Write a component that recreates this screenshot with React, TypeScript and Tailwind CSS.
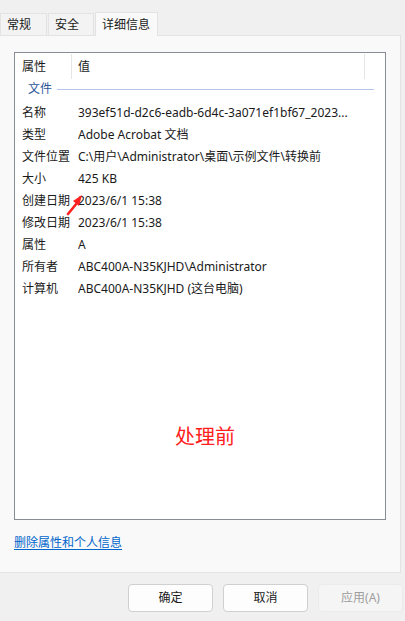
import React from "react";

const rows: [string, string][] = [
  ["名称", "393ef51d-d2c6-eadb-6d4c-3a071ef1bf67_2023..."],
  ["类型", "Adobe Acrobat 文档"],
  ["文件位置", "C:\\用户\\Administrator\\桌面\\示例文件\\转换前"],
  ["大小", "425 KB"],
  ["创建日期", "2023/6/1 15:38"],
  ["修改日期", "2023/6/1 15:38"],
  ["属性", "A"],
  ["所有者", "ABC400A-N35KJHD\\Administrator"],
  ["计算机", "ABC400A-N35KJHD (这台电脑)"],
];

export default function App() {
  return (
    <div
      className="w-[405px] h-[621px] bg-[#f0f0f0] text-[12px] text-[#1a1a1a] flex flex-col overflow-hidden"
      style={{ fontFamily: '"Noto Sans", "Noto Sans CJK SC", sans-serif' }}
    >
      {/* Tabs */}
      <div className="flex items-end h-[35px] pl-0 gap-[1px]">
        <div className="w-[47px] h-[22px] flex items-center pl-[6px] bg-[#f3f3f3] border border-b-0 border-[#e3e3e3]">常规</div>
        <div className="w-[46px] h-[22px] flex items-center pl-[6px] bg-[#f3f3f3] border border-b-0 border-[#e3e3e3]">安全</div>
        <div className="w-[63px] h-[24px] flex items-center pl-[6px] bg-[#f9f9f9] border border-b-0 border-[#e3e3e3] relative z-10 -mb-[1px]">详细信息</div>
      </div>
      {/* Panel */}
      <div className="w-[401px] h-[538px] bg-[#f9f9f9] border-r border-b border-t border-[#e3e3e3] flex flex-col pt-[16px] pl-[14px]">
        <div className="relative w-[372px] h-[468px] bg-white border border-[#888c95] flex flex-col">
          {/* header */}
          <div className="flex h-[25px] items-center">
            <div className="w-[57px] pl-[7px] h-full flex items-center border-r border-[#e5e5e5] mt-[2px]">属性</div>
            <div className="w-[293px] pl-[6px] h-full flex items-center border-r border-[#e5e5e5] mt-[2px]">值</div>
          </div>
          {/* group */}
          <div className="flex items-center h-[22px] pl-[13px] pr-[11px] mb-[2px]">
            <span className="text-[#2b579a]">文件</span>
            <div className="flex-1 h-[1px] bg-[#b4c6ea] ml-[5px]" />
          </div>
          {rows.map(([k, v]) => (
            <div key={k} className="flex items-center h-[22px] whitespace-nowrap">
              <div className="w-[63px] pl-[7px]">{k}</div>
              <div className="overflow-hidden">{v}</div>
            </div>
          ))}
          <div className="flex-1 flex items-start justify-center pt-[122px] pl-[10px]">
            <span className="text-[20px] text-[#ff2020]">处理前</span>
          </div>
          <svg
            className="absolute left-[50px] top-[140px]"
            width="20"
            height="24"
            viewBox="0 0 20 24"
          >
            <path d="M3 21 L12 10" stroke="#ff2020" strokeWidth="2.6" strokeLinecap="round" />
            <path d="M17 2 L8 8 L14 13 Z" fill="#ff2020" />
          </svg>
        </div>
        <div className="mt-[14px]">
          <span className="text-[#0066cc] underline underline-offset-2">删除属性和个人信息</span>
        </div>
      </div>
      {/* Buttons */}
      <div className="flex gap-[10px] pl-[128px] pt-[11px]">
        <button className="w-[85px] h-[28px] bg-[#fdfdfd] border border-[#d0d0d0] rounded-[4px] text-[#1a1a1a]">确定</button>
        <button className="w-[85px] h-[28px] bg-[#fdfdfd] border border-[#d0d0d0] rounded-[4px] text-[#1a1a1a]">取消</button>
        <button className="w-[85px] h-[28px] bg-[#f5f5f5] border border-[#ebebeb] rounded-[4px] text-[#9d9d9d]">应用(A)</button>
      </div>
    </div>
  );
}
